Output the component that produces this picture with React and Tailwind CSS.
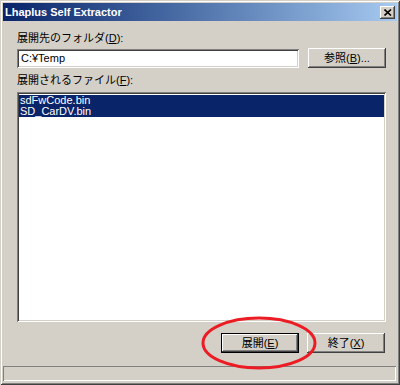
import React from 'react';

const font = "font-['Liberation_Sans','Noto_Sans_CJK_JP',sans-serif]";
const raised = 'shadow-[inset_-1px_-1px_#404040,inset_1px_1px_#ffffff,inset_-2px_-2px_#808080,inset_2px_2px_#d4d0c8]';
const sunken = 'shadow-[inset_1px_1px_#808080,inset_-1px_-1px_#ffffff,inset_2px_2px_#404040,inset_-2px_-2px_#d4d0c8]';

const Key = ({ children }) => <span className="underline underline-offset-1">{children}</span>;

const Button = ({ children, isDefault }) => (
    <button
        className={`flex h-[20px] w-[78px] items-center justify-center bg-[#d4d0c8] text-[11px] leading-none text-black ${raised} ${isDefault ? 'border border-black' : ''}`}
    >
        {children}
    </button>
);

const App = () => {
    const files = ['sdFwCode.bin', 'SD_CarDV.bin'];

    return (
        <div className={`relative flex h-[385px] w-[400px] flex-col bg-[#d4d0c8] p-[3px] text-black ${font} shadow-[inset_1px_1px_#d4d0c8,inset_-1px_-1px_#404040,inset_2px_2px_#ffffff,inset_-2px_-2px_#808080]`}>
            {/* Title bar */}
            <div className="flex h-[18px] items-center justify-between bg-gradient-to-r from-[#0a246a] to-[#a6caf0] pl-[2px] pr-[2px]">
                <span className="text-[11px] font-bold leading-none text-white">Lhaplus Self Extractor</span>
                <span className={`flex h-[13px] w-[15px] items-center justify-center bg-[#d4d0c8] ${raised}`}>
                    <svg width="8" height="7" viewBox="0 0 8 7">
                        <path d="M0.5 0.5 L7 6.5 M7 0.5 L0.5 6.5" stroke="#000" strokeWidth="1.6" />
                    </svg>
                </span>
            </div>

            {/* Body */}
            <div className="flex flex-1 flex-col pl-[14px] pr-[11px] pt-[11px]">
                <div className="h-[13px] text-[11px] leading-[13px]">
                    展開先のフォルダ(<Key>D</Key>):
                </div>
                <div className="mt-[3px] flex h-[20px] items-center gap-[9px]">
                    <div className={`flex h-[19px] flex-1 items-center bg-white pl-[4px] text-[11px] ${sunken}`}>
                        C:¥Temp
                    </div>
                    <Button>
                        参照(<Key>B</Key>)...
                    </Button>
                </div>
                <div className="mt-[6px] h-[13px] text-[11px] leading-[13px]">
                    展開されるファイル(<Key>F</Key>):
                </div>
                <div className={`mt-[5px] h-[230px] bg-white p-[2px] ${sunken}`}>
                    <div className="pt-px">
                        {files.map(f => (
                            <div key={f} className="h-[11px] bg-[#0a246a] pl-[1px] text-[11px] leading-[11px] text-white">
                                {f}
                            </div>
                        ))}
                    </div>
                </div>
                <div className="mt-[11px] flex justify-end gap-[8px] pr-px">
                    <Button isDefault>
                        展開(<Key>E</Key>)
                    </Button>
                    <Button>
                        終了(<Key>X</Key>)
                    </Button>
                </div>
            </div>

            {/* Status bar */}
            <div className="mb-px mr-px h-[15px] shadow-[inset_1px_1px_#808080,inset_-1px_-1px_#ffffff]" />

            {/* Red highlight ring */}
            <svg className="pointer-events-none absolute left-[200px] top-[315px]" width="118" height="56" viewBox="0 0 118 56">
                <ellipse cx="59" cy="28" rx="56" ry="25" fill="none" stroke="#ec1c24" strokeWidth="3" />
            </svg>
        </div>
    );
};

export default App;
